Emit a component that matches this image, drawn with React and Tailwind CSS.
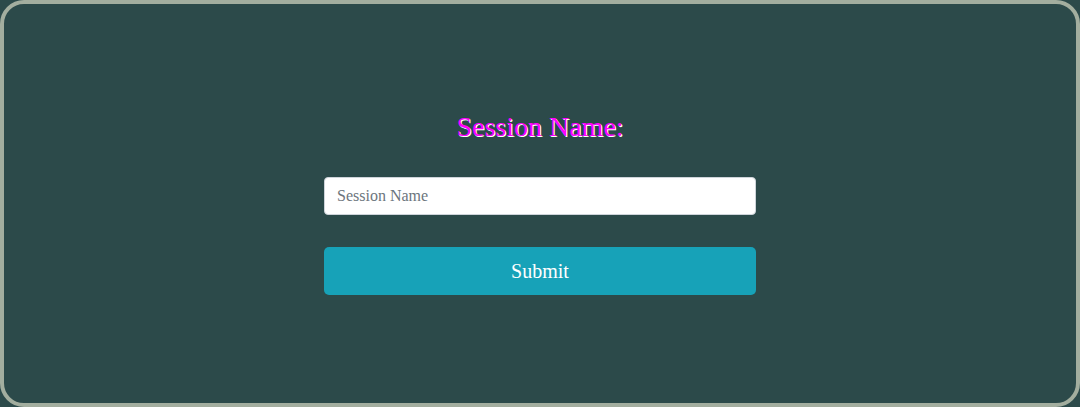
export default function App() {
  return (
    <div className="w-[1080px] h-[407px] bg-[#2c4a4a]">
      <div className="h-full w-full border-4 border-[#a3ae9f] rounded-[24px] bg-[#2c4a4a] flex flex-col items-center justify-center font-['Liberation_Serif',serif]">
        <div className="w-[432px] flex flex-col items-center mb-[2px]">
          <h1 className="text-[28px] leading-[34px] text-[#ff00ff] [text-shadow:1px_1px_0_#ffffff]">Session Name:</h1>
          <input
            type="text"
            placeholder="Session Name"
            className="mt-[33px] w-full h-[38px] bg-white border border-[#ced4da] rounded-[4px] px-3 text-[16px] text-[#495057] placeholder:text-[#6c757d] outline-none font-['Liberation_Serif',serif]"
          />
          <button className="mt-[32px] w-full h-[48px] bg-[#17a2b8] rounded-[5px] text-white text-[20px] font-['Liberation_Serif',serif]">
            Submit
          </button>
        </div>
      </div>
    </div>
  );
}
